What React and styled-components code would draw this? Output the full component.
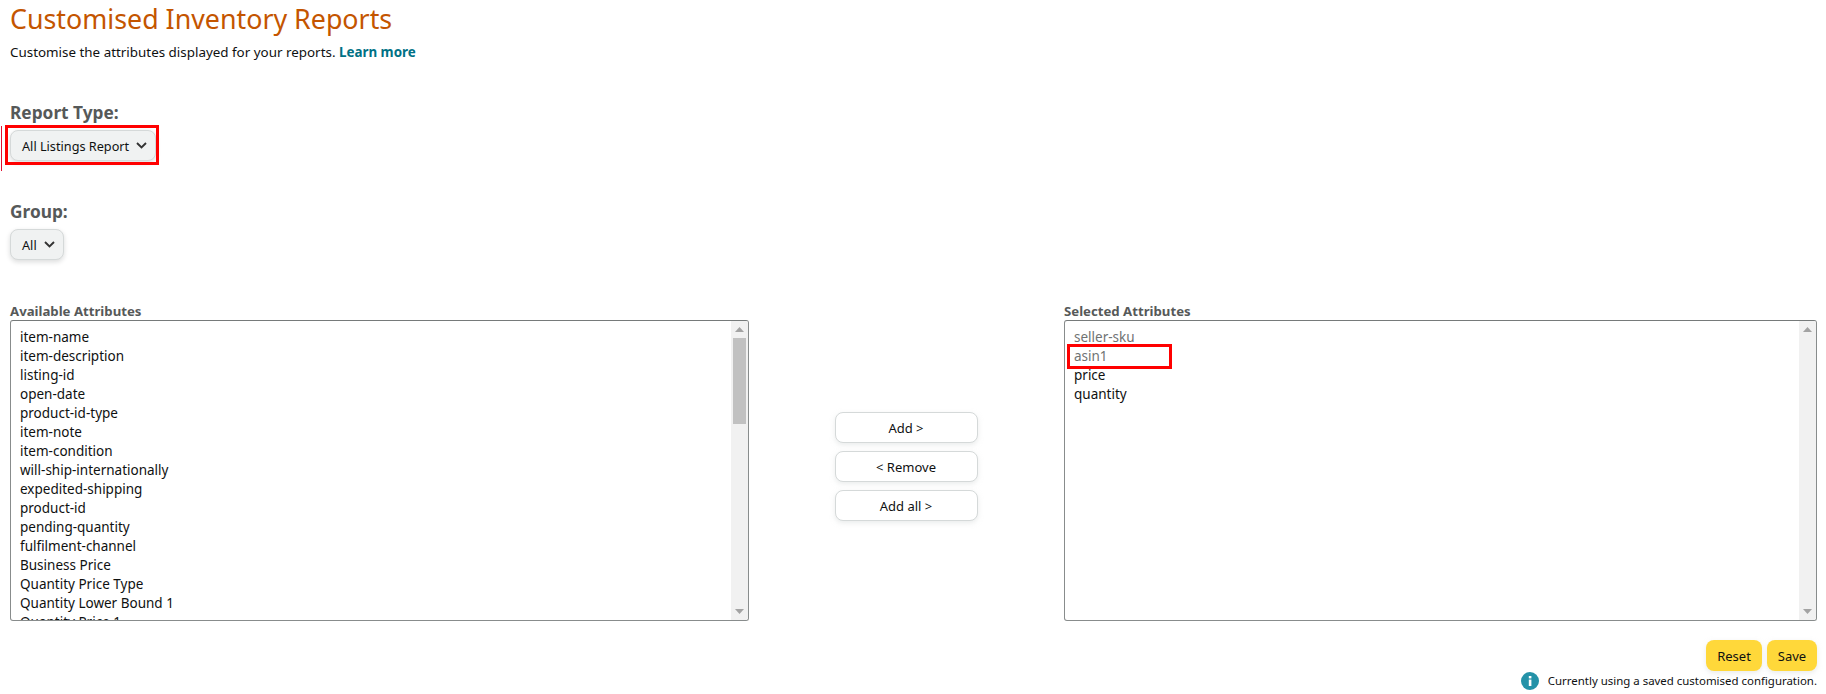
import React from 'react';
import styled, { createGlobalStyle } from 'styled-components';

const GlobalStyle = createGlobalStyle`
	html, body {
		margin: 0;
		padding: 0;
		background: #fff;
	}
	body {
		font-family: 'Noto Sans', 'Open Sans', sans-serif;
		color: #0f1111;
	}
`;

const available = [
	'item-name',
	'item-description',
	'listing-id',
	'open-date',
	'product-id-type',
	'item-note',
	'item-condition',
	'will-ship-internationally',
	'expedited-shipping',
	'product-id',
	'pending-quantity',
	'fulfilment-channel',
	'Business Price',
	'Quantity Price Type',
	'Quantity Lower Bound 1',
	'Quantity Price 1',
];

const selected = [
	{ name: 'seller-sku', locked: true },
	{ name: 'asin1', locked: true, marked: true },
	{ name: 'price' },
	{ name: 'quantity' },
];

const Page = styled.div`
	position: relative;
	height: 694px;
	overflow: hidden;
	padding: 0 9px 0 10px;
	box-sizing: border-box;
`;

const Title = styled.h1`
	margin: 0;
	padding-top: 1px;
	font-size: 26.8px;
	line-height: 36px;
	font-weight: 400;
	color: #c45500;
`;

const Intro = styled.p`
	margin: 6px 0 0;
	font-size: 13.4px;
	line-height: 19px;
`;

const LearnMore = styled.a`
	font-weight: 700;
	color: #007185;
`;

const Field = styled.div`
	margin-top: ${(p) => p.$top}px;
`;

const FieldLabel = styled.div`
	font-size: 17.3px;
	line-height: 22px;
	font-weight: 700;
	color: #565959;
`;

const Dropdown = styled.div`
	position: relative;
	display: flex;
	width: fit-content;
	align-items: center;
	gap: 7px;
	height: 31px;
	margin-top: 6px;
	padding: 0 8px 0 11px;
	box-sizing: border-box;
	border: 1px solid #d5d9d9;
	border-radius: 8px;
	background: #f0f2f2;
	box-shadow: 0 2px 5px rgba(15, 17, 17, 0.15);
	font-size: 12.7px;
`;

const Marker = styled.span`
	position: absolute;
	top: -6px;
	left: -6px;
	right: -4px;
	bottom: -5px;
	border: 3px solid #f00;
	pointer-events: none;
`;

const EdgeLine = styled.span`
	position: absolute;
	left: 1px;
	top: 126px;
	width: 1px;
	height: 45px;
	background: #e01030;
`;

const Columns = styled.div`
	display: grid;
	grid-template-columns: 739px 1fr 753px;
	margin-top: 42px;
`;

const ListLabel = styled.div`
	font-size: 13.2px;
	line-height: 18px;
	font-weight: 700;
	color: #565959;
`;

const ListBox = styled.div`
	display: flex;
	height: 301px;
	box-sizing: border-box;
	border: 1px solid #888c8c;
	border-top-color: #767a7a;
	border-radius: 3px;
	overflow: hidden;
`;

const Items = styled.ul`
	flex: 1;
	margin: 0;
	padding: 7px 9px 0;
	list-style: none;
	overflow: hidden;
`;

const Item = styled.li`
	position: relative;
	height: 19px;
	font-size: 13.5px;
	line-height: 19px;
	white-space: nowrap;
	color: ${(p) => (p.$locked ? '#6f7373' : '#0f1111')};
`;

const ItemMarker = styled.span`
	position: absolute;
	top: -3px;
	left: -7px;
	width: 105px;
	height: 25px;
	box-sizing: border-box;
	border: 3px solid #f00;
`;

const Scrollbar = styled.div`
	display: flex;
	flex-direction: column;
	justify-content: space-between;
	width: 17px;
	background: #f1f1f1;
`;

const ScrollTop = styled.div``;

const Arrow = styled.div`
	height: 17px;
	display: flex;
	align-items: center;
	justify-content: center;
`;

const Thumb = styled.div`
	width: 13px;
	height: 86px;
	margin: 0 2px;
	background: #c1c1c1;
`;

const Middle = styled.div`
	display: flex;
	flex-direction: column;
	align-items: center;
	gap: 8px;
	padding-top: 110px;
	padding-right: 1px;
`;

const MoveButton = styled.button`
	width: 143px;
	height: 31px;
	padding: 0;
	border: 1px solid #d5d9d9;
	border-radius: 8px;
	background: #fff;
	box-shadow: 0 2px 5px rgba(213, 217, 217, 0.5);
	font-family: inherit;
	font-size: 13px;
	color: #0f1111;
`;

const Footer = styled.div`
	display: flex;
	flex-direction: column;
	align-items: flex-end;
	margin-top: 19px;
`;

const Actions = styled.div`
	display: flex;
	gap: 5px;
`;

const SaveButton = styled.button`
	height: 31px;
	width: ${(p) => p.$width}px;
	padding: 0;
	border: 0;
	border-radius: 8px;
	background: #ffd83a;
	box-shadow: 0 2px 5px rgba(213, 217, 217, 0.5);
	font-family: inherit;
	font-size: 13px;
	color: #0f1111;
`;

const Notice = styled.div`
	display: flex;
	align-items: center;
	gap: 9px;
	margin-top: 1px;
	font-size: 11.45px;
	line-height: 18px;
	color: #0f1111;
`;

const Chevron = () => (
	<svg width="11" height="7" viewBox="0 0 11 7" fill="none">
		<path d="M1 1l4.5 4.5L10 1" stroke="#333" strokeWidth="1.9" />
	</svg>
);

const InfoIcon = () => (
	<svg width="18" height="18" viewBox="0 0 18 18">
		<circle cx="9" cy="9" r="9" fill="#2492a8" />
		<rect x="7.8" y="7.6" width="2.6" height="6.4" fill="#fff" />
		<rect x="7.8" y="4" width="2.6" height="2.4" fill="#fff" />
	</svg>
);

const ScrollArrow = ({ down }) => (
	<svg width="9" height="5" viewBox="0 0 9 5">
		<path d={down ? 'M0 0h9L4.5 5z' : 'M0 5h9L4.5 0z'} fill="#a3a3a3" />
	</svg>
);

const App = () => {
	return (
		<Page>
			<GlobalStyle />
			<EdgeLine />
			<Title>Customised Inventory Reports</Title>
			<Intro>
				Customise the attributes displayed for your reports. <LearnMore>Learn more</LearnMore>
			</Intro>

			<Field $top={40}>
				<FieldLabel>Report Type:</FieldLabel>
				<Dropdown>
					All Listings Report <Chevron />
					<Marker />
				</Dropdown>
			</Field>

			<Field $top={40}>
				<FieldLabel>Group:</FieldLabel>
				<Dropdown>
					All <Chevron />
				</Dropdown>
			</Field>

			<Columns>
				<div>
					<ListLabel>Available Attributes</ListLabel>
					<ListBox>
						<Items>
							{available.map((name) => (
								<Item key={name}>{name}</Item>
							))}
						</Items>
						<Scrollbar>
							<ScrollTop>
								<Arrow>
									<ScrollArrow />
								</Arrow>
								<Thumb />
							</ScrollTop>
							<Arrow>
								<ScrollArrow down />
							</Arrow>
						</Scrollbar>
					</ListBox>
				</div>

				<Middle>
					<MoveButton>Add &gt;</MoveButton>
					<MoveButton>&lt; Remove</MoveButton>
					<MoveButton>Add all &gt;</MoveButton>
				</Middle>

				<div>
					<ListLabel>Selected Attributes</ListLabel>
					<ListBox>
						<Items>
							{selected.map((item) => (
								<Item key={item.name} $locked={item.locked}>
									{item.marked && <ItemMarker />}
									{item.name}
								</Item>
							))}
						</Items>
						<Scrollbar>
							<Arrow>
								<ScrollArrow />
							</Arrow>
							<Arrow>
								<ScrollArrow down />
							</Arrow>
						</Scrollbar>
					</ListBox>
				</div>
			</Columns>

			<Footer>
				<Actions>
					<SaveButton $width={56}>Reset</SaveButton>
					<SaveButton $width={50}>Save</SaveButton>
				</Actions>
				<Notice>
					<InfoIcon />
					Currently using a saved customised configuration.
				</Notice>
			</Footer>
		</Page>
	);
};

export default App;
